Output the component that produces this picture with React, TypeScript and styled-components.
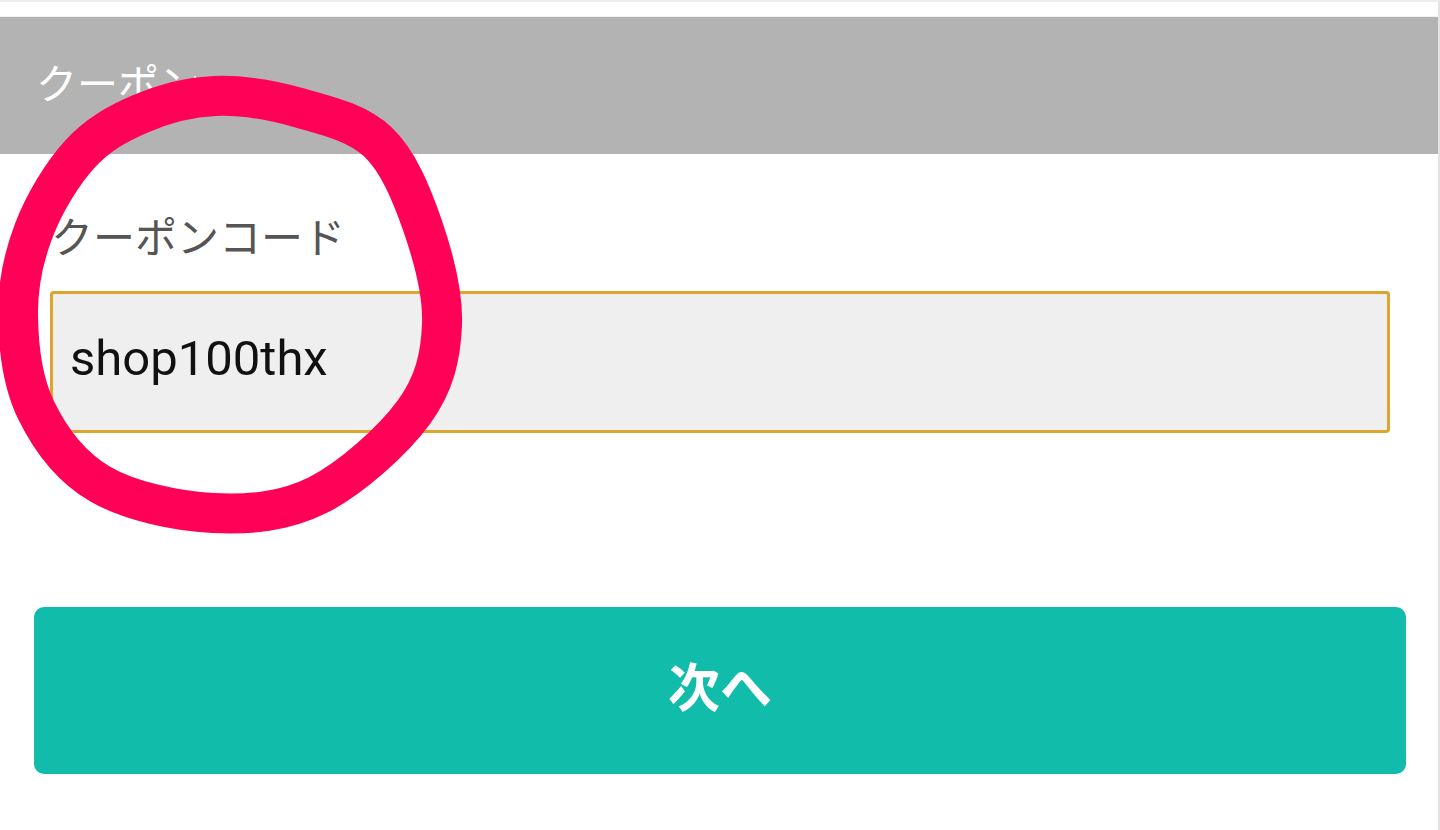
import React from "react";
import styled, { createGlobalStyle } from "styled-components";

const GlobalStyle = createGlobalStyle`
  html, body {
    margin: 0;
    padding: 0;
    background: #ffffff;
  }
  body {
    font-family: Roboto, "Noto Sans CJK JP", sans-serif;
  }
`;

const Page = styled.div`
  position: relative;
  box-sizing: border-box;
  width: 1440px;
  height: 830px;
  overflow: hidden;
  background: #ffffff;
  border-right: 2px solid #e4e4e4;
  border-top: 2px solid #ededed;
`;

const TopGap = styled.div`
  height: 14px;
  border-bottom: 1px solid #f2f2f2;
`;

const Header = styled.div`
  display: flex;
  align-items: center;
  box-sizing: border-box;
  height: 137px;
  padding: 0 0 10px 36px;
  background: #b3b3b3;
  color: #ffffff;
  font-size: 41px;
`;

const Form = styled.div`
  display: flex;
  flex-direction: column;
  padding: 0 48px 0 50px;
`;

const Label = styled.div`
  margin: 57px 0 24px;
  padding-left: 1px;
  color: #555555;
  font-size: 42px;
  line-height: 56px;
`;

const Input = styled.input`
  box-sizing: border-box;
  width: 100%;
  height: 142px;
  margin: 0;
  padding: 0 0 8px 17px;
  border: 3px solid #dba62b;
  border-radius: 4px;
  background: #efefef;
  color: #111111;
  font-family: Roboto, sans-serif;
  font-size: 49px;
  outline: none;
`;

const Actions = styled.div`
  display: flex;
  padding: 174px 32px 0 34px;
`;

const NextButton = styled.button`
  flex: 1;
  height: 167px;
  border: none;
  border-radius: 10px;
  background: #12bcab;
  color: #ffffff;
  font-family: "Noto Sans CJK JP", sans-serif;
  font-size: 52px;
  font-weight: 700;
  padding: 0 0 12px;
`;

const Scribble = styled.svg`
  position: absolute;
  left: 0;
  top: 0;
  pointer-events: none;
`;

const pts: [number, number][] = [
  [215, 94],
  [300, 106],
  [378, 140],
  [422, 222],
  [442, 323],
  [414, 410],
  [318, 493],
  [213, 511],
  [100, 482],
  [36, 408],
  [18, 313],
  [34, 228],
  [80, 152],
  [140, 112],
];

// closed catmull-rom through the points
const loopPath = (p: [number, number][]) => {
  const n = p.length;
  let d = `M${p[0][0]},${p[0][1]}`;
  for (let i = 0; i < n; i++) {
    const p0 = p[(i - 1 + n) % n];
    const p1 = p[i];
    const p2 = p[(i + 1) % n];
    const p3 = p[(i + 2) % n];
    const c1x = p1[0] + (p2[0] - p0[0]) / 6;
    const c1y = p1[1] + (p2[1] - p0[1]) / 6;
    const c2x = p2[0] - (p3[0] - p1[0]) / 6;
    const c2y = p2[1] - (p3[1] - p1[1]) / 6;
    d += ` C${c1x},${c1y} ${c2x},${c2y} ${p2[0]},${p2[1]}`;
  }
  return d + "Z";
};

export default function App() {
  return (
    <>
      <GlobalStyle />
      <Page>
        <TopGap />
        <Header>クーポン</Header>
        <Form>
          <Label>クーポンコード</Label>
          <Input defaultValue="shop100thx" />
        </Form>
        <Actions>
          <NextButton>次へ</NextButton>
        </Actions>
        <Scribble width="500" height="560" viewBox="0 0 500 560">
          <path
            d={loopPath(pts)}
            fill="none"
            stroke="#ff0257"
            strokeWidth="40"
            strokeLinejoin="round"
          />
        </Scribble>
      </Page>
    </>
  );
}
